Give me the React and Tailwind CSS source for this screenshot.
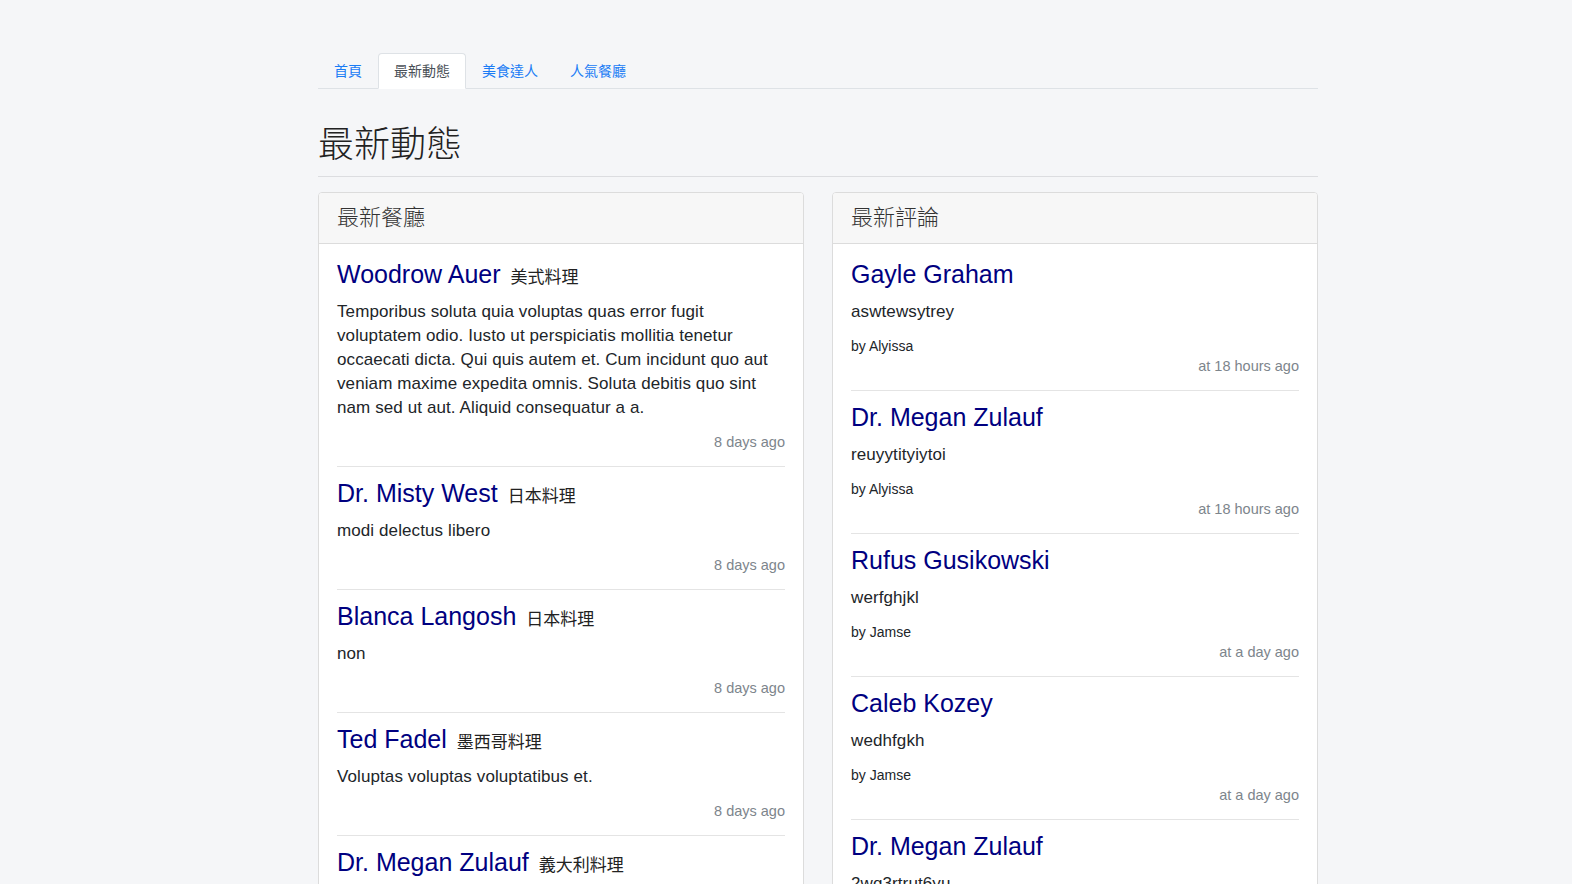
const font = "font-['Liberation_Sans','Noto_Sans_CJK_TC',sans-serif]"

const tabs = [
  { label: '首頁' },
  { label: '最新動態', active: true },
  { label: '美食達人' },
  { label: '人氣餐廳' }
]

const restaurants = [
  {
    name: 'Woodrow Auer',
    category: '美式料理',
    text: 'Temporibus soluta quia voluptas quas error fugit voluptatem odio. Iusto ut perspiciatis mollitia tenetur occaecati dicta. Qui quis autem et. Cum incidunt quo aut veniam maxime expedita omnis. Soluta debitis quo sint nam sed ut aut. Aliquid consequatur a a.',
    time: '8 days ago'
  },
  { name: 'Dr. Misty West', category: '日本料理', text: 'modi delectus libero', time: '8 days ago' },
  { name: 'Blanca Langosh', category: '日本料理', text: 'non', time: '8 days ago' },
  { name: 'Ted Fadel', category: '墨西哥料理', text: 'Voluptas voluptas voluptatibus et.', time: '8 days ago' },
  { name: 'Dr. Megan Zulauf', category: '義大利料理', text: 'Et aut quia rerum.', time: '8 days ago' }
]

const comments = [
  { name: 'Gayle Graham', text: 'aswtewsytrey', user: 'Alyissa', time: 'at 18 hours ago' },
  { name: 'Dr. Megan Zulauf', text: 'reuyytityiytoi', user: 'Alyissa', time: 'at 18 hours ago' },
  { name: 'Rufus Gusikowski', text: 'werfghjkl', user: 'Jamse', time: 'at a day ago' },
  { name: 'Caleb Kozey', text: 'wedhfgkh', user: 'Jamse', time: 'at a day ago' },
  { name: 'Dr. Megan Zulauf', text: '2wq3rtrut6yu', user: 'Jamse', time: 'at a day ago' }
]

function Card({ title, children }) {
  return (
    <div className="w-[486px] bg-white border border-[#dcdcdc] rounded-[4px] overflow-hidden self-start">
      <div className="h-[51px] bg-[#f7f7f7] border-b border-[#dcdcdc] px-[18px] pb-[2px] flex items-center text-[22px] font-light text-[#333]">
        {title}
      </div>
      <div className="px-[18px] pt-[4px]">{children}</div>
    </div>
  )
}

export default function App() {
  return (
    <div className={`min-h-screen bg-[#f5f6f8] ${font} text-[#212529]`}>
      <div className="ml-[318px] w-[1000px] pt-[53px]">
        {/* Tabs */}
        <div className="flex border-b border-[#dee2e6]">
          {tabs.map(t => (
            <div
              key={t.label}
              className={`h-[36px] px-[15px] pt-[1px] flex items-center text-[14px] -mb-px rounded-t-[4px] border ${
                t.active
                  ? 'bg-white border-[#dee2e6] border-b-white text-[#495057]'
                  : 'border-transparent text-[#1a7cf5]'
              }`}
            >
              {t.label}
            </div>
          ))}
        </div>

        <h1 className="mt-[35px] pb-[10px] border-b border-[#dcdde0] text-[36px] leading-[42px] font-light text-[#222]">最新動態</h1>

        <div className="mt-[15px] flex gap-[28px]">
          <Card title="最新餐廳">
            {restaurants.map((r, i) => (
              <div key={i} className="pt-3 pb-[14px] border-b border-[#e4e4e4]">
                <div className="flex items-baseline h-[28px] leading-[28px]">
                  <span className="text-[25px] text-[#000080]">{r.name}</span>
                  <span className="ml-[10px] text-[17px] text-[#222]">{r.category}</span>
                </div>
                <p className="mt-[12px] text-[17px] tracking-[0.1px] leading-[24px]">{r.text}</p>
                <div className="mt-[12px] text-right text-[14.5px] leading-[20px] text-[#7d858c]">{r.time}</div>
              </div>
            ))}
          </Card>

          <Card title="最新評論">
            {comments.map((c, i) => (
              <div key={i} className="pt-3 pb-[14px] border-b border-[#e4e4e4]">
                <div className="text-[25px] leading-[28px] text-[#000080]">{c.name}</div>
                <p className="mt-[12px] text-[17px] tracking-[0.1px] leading-[24px]">{c.text}</p>
                <div className="mt-[12px] text-[14px] leading-[20px]">by {c.user}</div>
                <div className="text-right text-[14.5px] leading-[20px] text-[#7d858c]">{c.time}</div>
              </div>
            ))}
          </Card>
        </div>
      </div>
    </div>
  )
}
